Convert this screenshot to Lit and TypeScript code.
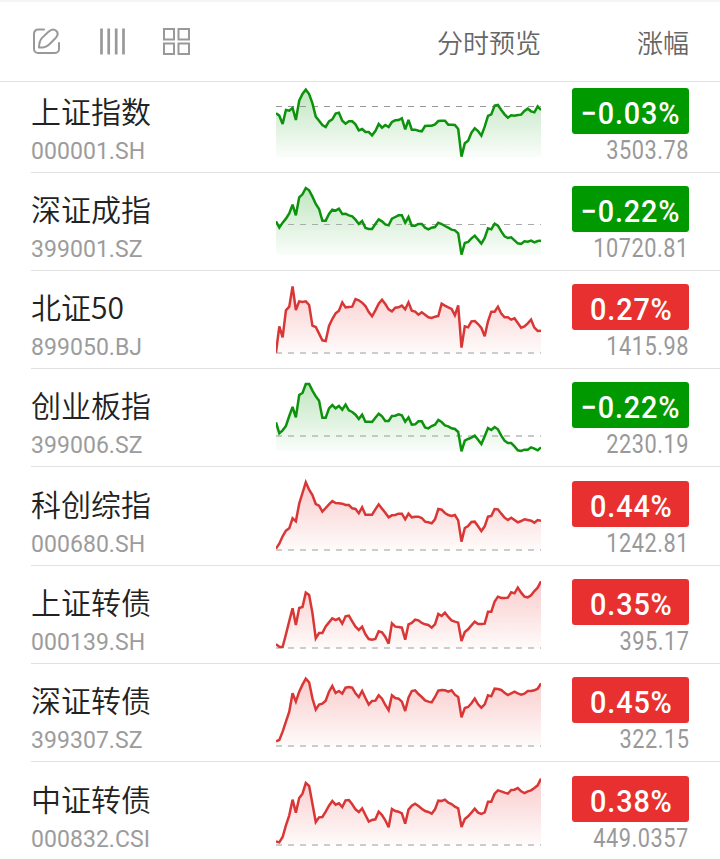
import { LitElement, html, svg, css } from "lit";
import { customElement, property } from "lit/decorators.js";
import { classMap } from "lit/directives/class-map.js";

interface Quote {
  name: string;
  code: string;
  change: string;
  price: string;
  up: boolean;
  // y of the previous close line and its thickness, in chart units
  base: number;
  baseWidth: number;
  baseColor: string;
  roomy?: boolean;
  points: number[];
}

const QUOTES: Quote[] = [
  {
    name: "上证指数", code: "000001.SH", change: "−0.03%", price: "3503.78", up: false,
    base: 79.5, baseWidth: 3, baseColor: "#999",
    points: [100,107,132,90,92,84,120,62,42,29,42,70,110,122,135,141,124,118,101,98,122,131,124,124,133,151,147,156,156,166,153,132,143,135,141,126,121,120,115,148,120,149,149,152,154,138,137,137,133,123,122,122,134,134,135,147,230,190,182,158,145,153,167,140,108,103,77,75,90,103,113,106,107,105,104,93,86,94,97,79,90],
  },
  {
    name: "深证成指", code: "399001.SZ", change: "−0.22%", price: "10720.81", up: false,
    base: 139.5, baseWidth: 3, baseColor: "#aaa",
    points: [130,149,134,122,106,80,112,58,49,30,37,56,78,93,128,128,108,95,98,92,108,107,112,115,125,138,129,150,153,153,138,124,130,139,142,122,117,112,112,134,117,143,143,138,138,149,154,149,147,134,138,144,149,155,157,166,230,195,192,181,173,185,197,180,151,154,137,143,160,175,180,178,187,196,198,190,191,188,193,189,188],
  },
  {
    name: "北证50", code: "899050.BJ", change: "0.27%", price: "1415.98", up: true,
    base: 231, baseWidth: 6, baseColor: "#ccc",
    points: [230,151,184,103,92,31,102,76,78,76,87,149,153,173,193,195,150,129,112,104,79,94,93,92,69,73,80,90,108,121,103,83,71,84,100,106,95,94,89,100,79,104,107,116,109,116,124,126,122,120,83,89,94,99,118,88,215,151,154,136,135,144,156,181,136,107,107,92,113,124,124,131,127,141,155,151,142,131,155,165,164],
  },
  {
    name: "创业板指", code: "399006.SZ", change: "−0.22%", price: "2230.19", up: false,
    base: 186, baseWidth: 4, baseColor: "#b4b8b4",
    points: [145,178,169,156,126,99,130,63,57,30,30,50,67,80,131,131,103,93,103,96,107,92,109,114,122,135,122,143,143,144,131,119,127,141,141,126,125,121,124,143,130,152,151,142,142,160,163,156,152,138,144,154,157,163,165,174,232,200,195,191,185,197,210,187,162,168,159,166,185,200,207,207,217,229,231,227,227,220,224,229,220],
  },
  {
    name: "科创综指", code: "000680.SH", change: "0.44%", price: "1242.81", up: true, roomy: true,
    base: 231, baseWidth: 6, baseColor: "#ccc",
    points: [227,212,190,173,166,136,145,92,60,28,50,66,93,98,116,105,94,84,90,91,92,96,96,106,108,121,103,125,125,125,109,94,107,119,133,127,126,122,122,139,122,133,131,131,135,146,148,151,139,108,110,120,126,129,126,142,206,165,159,147,146,160,174,160,131,129,108,109,122,134,141,134,141,148,144,139,141,143,149,141,143],
  },
  {
    name: "上证转债", code: "000139.SH", change: "0.35%", price: "395.17", up: true,
    base: 231, baseWidth: 6, baseColor: "#ccc",
    points: [220,227,228,190,150,112,162,111,108,65,72,126,202,186,186,166,154,142,147,142,158,136,134,151,167,177,167,190,204,206,204,181,184,198,218,157,167,168,170,206,160,156,146,148,156,160,162,170,160,129,135,125,138,148,152,155,210,183,175,163,152,159,159,158,122,122,92,77,81,81,80,64,67,50,65,77,79,73,60,50,31],
  },
  {
    name: "深证转债", code: "399307.SZ", change: "0.45%", price: "322.15", up: true,
    base: 231, baseWidth: 6, baseColor: "#ccc",
    points: [217,213,188,158,128,73,98,68,47,29,40,88,122,107,104,95,68,51,72,66,74,56,54,56,73,84,66,87,107,96,95,79,89,108,124,79,87,89,98,126,86,66,64,75,84,94,98,100,84,65,63,64,68,64,77,84,145,117,114,103,89,106,116,106,79,82,59,60,63,71,78,73,68,73,77,74,66,66,64,59,43],
  },
  {
    name: "中证转债", code: "000832.CSI", change: "0.38%", price: "449.0357", up: true, roomy: true,
    base: 231, baseWidth: 6, baseColor: "#ccc",
    points: [220,223,207,172,142,95,134,90,77,45,54,107,162,148,147,131,113,99,110,106,117,97,96,109,124,132,121,141,161,156,154,131,141,157,178,123,129,131,136,167,125,113,107,114,122,129,132,137,124,98,99,95,104,108,116,121,177,153,145,134,122,134,138,133,101,101,77,67,70,74,77,66,65,60,70,75,70,67,60,52,32],
  },
];

const CHART_WIDTH = 795;
const CHART_FLOOR = 231;

@customElement("spark-line")
class SparkLine extends LitElement {
  @property({ attribute: false }) quote!: Quote;

  static styles = css`
    :host { display: block; }
    .chart { display: block; width: 265px; height: 80px; }
    .line { fill: none; stroke-width: 7.5; stroke-linejoin: miter; stroke-miterlimit: 3; }
    .up .line { stroke: #d93636; }
    .down .line { stroke: #0c920c; }
    .up stop { stop-color: #e93030; }
    .down stop { stop-color: #009900; }
  `;

  render() {
    const q = this.quote;
    const step = CHART_WIDTH / (q.points.length - 1);
    const line = q.points.map((y, i) => `${(i * step).toFixed(1)},${y}`).join(" ");
    const area = `0,${CHART_FLOOR} ${line} ${CHART_WIDTH},${CHART_FLOOR}`;
    return html`<svg class="chart ${q.up ? "up" : "down"}" viewBox="0 0 795 240">
      ${svg`
        <defs>
          <linearGradient id="fade" gradientUnits="userSpaceOnUse" x1="0" y1="28" x2="0" y2="231">
            <stop offset="0" stop-opacity="0.25"></stop>
            <stop offset="1" stop-opacity="0.02"></stop>
          </linearGradient>
        </defs>
        <polygon points=${area} fill="url(#fade)"></polygon>
        <line x1="0" x2="795" y1=${q.base} y2=${q.base} stroke=${q.baseColor}
          stroke-width=${q.baseWidth} stroke-dasharray="18 18"></line>
        <polyline class="line" points=${line}></polyline>
      `}
    </svg>`;
  }
}

@customElement("app-root")
class AppRoot extends LitElement {
  static styles = css`
    :host {
      display: flex;
      flex-direction: column;
      box-sizing: border-box;
      width: 720px;
      height: 859px;
      overflow: hidden;
      background: #fff;
      border-top: 2px solid #f4f4f4;
      font-family: Roboto, "Noto Sans CJK SC", sans-serif;
    }
    .head {
      flex: none;
      display: flex;
      align-items: center;
      box-sizing: border-box;
      height: 80px;
      padding: 0 31px 0 32px;
      border-bottom: 1px solid #e2e2e2;
      color: #666;
      font-size: 26px;
      line-height: 40px;
    }
    .tools { display: flex; gap: 35px; flex: 1; }
    .tool { display: block; width: 30px; height: 30px; fill: none; stroke: #999; stroke-width: 2; }
    .label { padding-top: 4px; font-weight: 350; }
    .change-label { width: 148px; text-align: right; }
    .list { flex: 1; min-height: 0; overflow: hidden; }
    .row {
      display: flex;
      align-items: flex-start;
      box-sizing: border-box;
      height: 98px;
      margin-left: 31px;
      padding: 13px 31px 0 0;
      border-bottom: 1px solid #e2e2e2;
    }
    .row.first { height: 91px; padding-top: 6px; }
    .row.roomy { height: 99px; padding-top: 14px; }
    .row.last { border-bottom: none; }
    .id { width: 245px; }
    .name {
      height: 47px;
      color: #222;
      font-family: "Noto Sans CJK SC", sans-serif;
      font-size: 30px;
      font-weight: 350;
      line-height: 44px;
    }
    .code { color: #9c9c9c; font-size: 23px; line-height: 28px; margin-top: 3px; letter-spacing: 0.05px; }
    spark-line { width: 265px; margin-top: -8px; }
    .value { flex: 1; display: flex; flex-direction: column; align-items: flex-end; }
    .tag {
      display: flex;
      justify-content: center;
      width: 117px;
      height: 46px;
      border-radius: 3px;
      color: #fff;
      font-size: 31px;
      font-weight: 500;
      line-height: 51px;
    }
    .tag.up { background: #e93030; }
    .tag.down { background: #009900; }
    .figure { display: block; letter-spacing: 0.9px; margin-right: -0.9px; transform: scaleX(0.93); white-space: nowrap; }
    .price {
      color: #999;
      font-size: 25px;
      font-weight: 450;
      line-height: 28px;
      letter-spacing: 0.6px;
      margin-top: 3px;
      transform: scaleX(0.87);
      transform-origin: right;
    }
  `;

  render() {
    return html`
      <div class="head">
        <div class="tools">
          <svg class="tool" viewBox="0 0 30 30">
            <path d="M12 2.500H6a4 4 0 0 0-4 4V22a4 4 0 0 0 4 4H23a4 4 0 0 0 4-4v-6" stroke-linecap="round"></path>
            <path d="M7 20.500c.1-4.500 1-7.300 3-9.600l6.500-6.200c2.500-2.300 5.600-2.700 7.600-1 2 1.800 2 4.500-.2 7l-7 7C14.500 20 11.200 20.700 7 20.500z" stroke-linejoin="round"></path>
          </svg>
          <svg class="tool" viewBox="0 0 30 30">
            <path d="M4.500 1.500v26M11.700 1.500v26M19.200 1.500v26M26.500 1.500v26" stroke-width="2.700"></path>
          </svg>
          <svg class="tool" viewBox="0 0 30 30">
            <path d="M2 2H12v10.500H2zM16.500 2H27v10.500H16.500zM2 16.500H12V27H2zM16.500 16.500H27V27H16.500z"></path>
          </svg>
        </div>
        <div class="label">分时预览</div>
        <div class="label change-label">涨幅</div>
      </div>
      <div class="list">
        ${QUOTES.map(
          (q, i) => html`
            <div class=${classMap({ row: true, first: i === 0, roomy: !!q.roomy, last: i === QUOTES.length - 1 })}>
              <div class="id">
                <div class="name">${q.name}</div>
                <div class="code">${q.code}</div>
              </div>
              <spark-line .quote=${q}></spark-line>
              <div class="value">
                <div class="tag ${q.up ? "up" : "down"}"><span class="figure">${q.change}</span></div>
                <div class="price">${q.price}</div>
              </div>
            </div>
          `,
        )}
      </div>
    `;
  }
}
